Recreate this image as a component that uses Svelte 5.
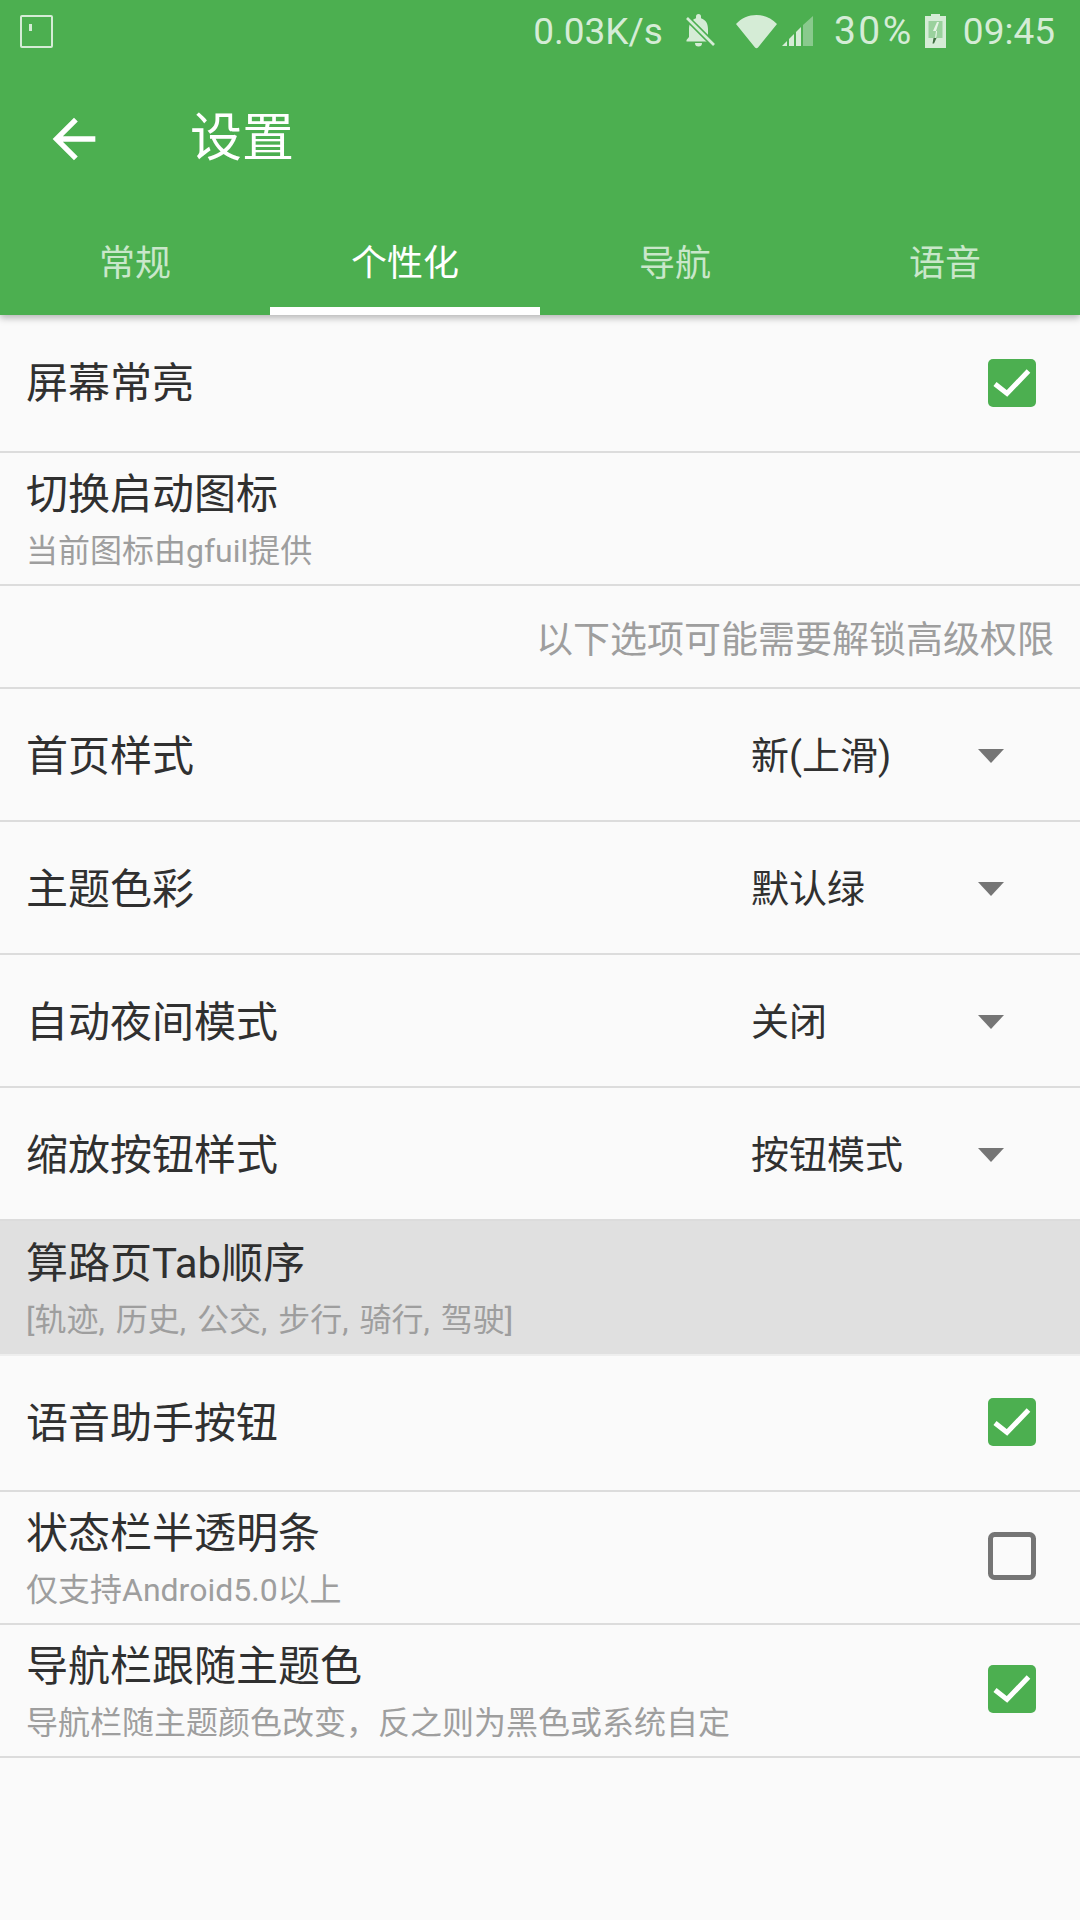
<script lang="ts">
	const tabs = ['常规', '个性化', '导航', '语音'];
	const activeTab = 1;
	const rows = [
		{ kind: 'check', title: '屏幕常亮', checked: true, height: 138 },
		{ kind: 'text', title: '切换启动图标', sub: '当前图标由gfuil提供', height: 133 },
		{ kind: 'note', title: '以下选项可能需要解锁高级权限', height: 103 },
		{ kind: 'select', title: '首页样式', value: '新(上滑)', height: 133 },
		{ kind: 'select', title: '主题色彩', value: '默认绿', height: 133 },
		{ kind: 'select', title: '自动夜间模式', value: '关闭', height: 133 },
		{ kind: 'select', title: '缩放按钮样式', value: '按钮模式', height: 133 },
		{ kind: 'text', title: '算路页Tab顺序', sub: '[轨迹, 历史, 公交, 步行, 骑行, 驾驶]', height: 135, pressed: true },
		{ kind: 'check', title: '语音助手按钮', checked: true, height: 136 },
		{ kind: 'check', title: '状态栏半透明条', sub: '仅支持Android5.0以上', checked: false, height: 133 },
		{ kind: 'check', title: '导航栏跟随主题色', sub: '导航栏随主题颜色改变，反之则为黑色或系统自定', checked: true, height: 133 }
	];
</script>

<div class="page" lang="zh-CN">
	<header class="appbar">
		<div class="status">
			<svg class="notif" viewBox="0 0 33 33" aria-hidden="true">
				<rect x="1" y="1" width="31" height="31" rx="1" fill="none" stroke="currentColor" stroke-width="2" />
				<rect x="9" y="9" width="3" height="7" fill="currentColor" />
			</svg>
			<span class="spacer"></span>
			<span class="speed">0.03K/s</span>
			<svg class="bell" viewBox="0 0 30 34" aria-hidden="true">
				<path d="M13.500 0a2.500 2.500 0 0 1 2.500 2.500v1.700C21 5.800 23 10 23 15v8l2.500 3v1.500H1.500V26L4 23v-8c0-5 2-9.200 7-10.800V2.500A2.500 2.500 0 0 1 13.500 0z" fill="currentColor" />
				<path d="M10 29h7a3.500 3.500 0 0 1-7 0z" fill="currentColor" />
				<path d="M2 4l27 27" stroke="#4caf50" stroke-width="6" />
				<path d="M2 4l27 27" stroke="currentColor" stroke-width="2.600" />
			</svg>
			<svg class="wifi" viewBox="0 0 41 35" aria-hidden="true">
				<path d="M0 10C5.500 4 12.500 1 20.500 1S35.500 4 41 10L22 33.500c-.8 1-2.200 1-3 0z" fill="currentColor" />
			</svg>
			<svg class="signal" viewBox="0 0 31 30" aria-hidden="true">
				<path d="M0 30l5-5v5z" fill="currentColor" />
				<path d="M7 23l5-5v12H7z" fill="currentColor" />
				<path d="M14 16l5-5v19h-5z" fill="currentColor" />
				<path d="M21 9L31 0v30H21z" fill="currentColor" opacity="0.45" />
			</svg>
			<span class="percent">30%</span>
			<svg class="battery" viewBox="0 0 21 34" aria-hidden="true">
				<path d="M6 0h9v2h6v32H0V2h6z" fill="currentColor" />
				<rect x="3.500" y="7" width="14" height="17" fill="#9ad19d" />
				<path d="M12 8L8 17h3l-1 7h-2l-1.500 6 5-7.500L12 17h-1l3-9z" fill="#e6f4e6" />
				<path d="M8.500 24h3L9 29.500H7.500z" fill="#3f6f41" />
			</svg>
			<span class="clock">09:45</span>
		</div>

		<div class="toolbar">
			<svg class="back" viewBox="0 0 24 24" aria-hidden="true">
				<path d="M20 11H7.830l5.590-5.590L12 4l-8 8 8 8 1.410-1.410L7.830 13H20v-2z" fill="currentColor" />
			</svg>
			<span class="title">设置</span>
		</div>

		<nav class="tabs">
			{#each tabs as tab, i}
				<div class="tab" class:active={i === activeTab}>{tab}</div>
			{/each}
		</nav>
	</header>

	<main class="list">
		{#each rows as row}
			<div
				class="row"
				class:pressed={row.pressed}
				class:note={row.kind === 'note'}
				class:with-select={row.kind === 'select'}
				style="height: {row.height}px"
			>
				{#if row.kind === 'note'}
					<span class="note-text">{row.title}</span>
				{:else}
					<div class="labels">
						<span class="row-title">{row.title}</span>
						{#if row.sub}
							<span class="row-sub">{row.sub}</span>
						{/if}
					</div>
				{/if}

				{#if row.kind === 'select'}
					<div class="select">
						<span class="select-value">{row.value}</span>
						<span class="caret"></span>
					</div>
				{/if}

				{#if row.kind === 'check'}
					{#if row.checked}
						<svg class="checkbox" viewBox="0 0 48 48" aria-hidden="true">
							<rect width="48" height="48" rx="5" fill="#4caf50" />
							<path d="M7 25l12 9.500L40.500 12" fill="none" stroke="#fff" stroke-width="5" />
						</svg>
					{:else}
						<svg class="checkbox" viewBox="0 0 48 48" aria-hidden="true">
							<rect x="2.500" y="2.500" width="43" height="43" rx="4" fill="none" stroke="#757575" stroke-width="5" />
						</svg>
					{/if}
				{/if}
			</div>
		{/each}
	</main>
</div>

<style>
	:global(body) {
		background: #fafafa;
	}

	.page {
		width: 1080px;
		height: 1920px;
		overflow: hidden;
		display: flex;
		flex-direction: column;
		background: #fafafa;
		font-family: Roboto, 'Noto Sans CJK SC', sans-serif;
	}

	/* ===== App bar ===== */
	.appbar {
		position: relative;
		z-index: 1;
		background: #4caf50;
		color: #fff;
		box-shadow: 0 3px 7px rgba(0, 0, 0, 0.28);
	}
	.status {
		height: 62px;
		display: flex;
		align-items: center;
		padding: 0 25px 0 20px;
		color: #d5ecd6;
		font-size: 37px;
	}
	.spacer {
		flex: 1;
	}
	.notif {
		width: 33px;
		height: 33px;
	}
	.bell {
		width: 30px;
		height: 34px;
		margin-left: 22px;
	}
	.wifi {
		width: 41px;
		height: 35px;
		margin-left: 21px;
	}
	.signal {
		width: 31px;
		height: 30px;
		margin-left: 5px;
	}
	.percent {
		margin-left: 21px;
		font-size: 39px;
		letter-spacing: 2.5px;
	}
	.battery {
		width: 21px;
		height: 34px;
		margin-left: 11px;
	}
	.clock {
		margin-left: 17px;
	}

	.toolbar {
		height: 158px;
		display: flex;
		align-items: center;
		padding-left: 42px;
	}
	.back {
		width: 64px;
		height: 64px;
		margin-top: -4px;
	}
	.title {
		margin-left: 84px;
		font-size: 52px;
		line-height: 1;
		margin-top: -4px;
	}

	.tabs {
		height: 95px;
		display: grid;
		grid-template-columns: repeat(4, 270px);
	}
	.tab {
		display: flex;
		align-items: center;
		justify-content: center;
		padding-bottom: 16px;
		box-sizing: border-box;
		font-size: 36px;
		color: #c9e7ca;
	}
	.tab.active {
		color: #fff;
		border-bottom: 8px solid #fff;
		padding-bottom: 8px;
	}

	/* ===== Rows ===== */
	.list {
		display: flex;
		flex-direction: column;
	}
	.row {
		display: flex;
		align-items: center;
		padding: 0 44px 0 26px;
		box-sizing: border-box;
		border-bottom: 2px solid #dcdcdc;
	}
	.row.pressed {
		background: #e0e0e0;
		border-bottom-color: #eeeeee;
	}
	.row.note {
		justify-content: flex-end;
		padding-right: 26px;
	}
	.row.with-select {
		padding-top: 2px;
	}
	.row.pressed ~ .row .checkbox {
		margin-bottom: 3px;
	}
	.note-text {
		font-size: 37px;
		color: #9e9e9e;
	}
	.labels {
		flex: 1;
		display: flex;
		flex-direction: column;
		gap: 10px;
		padding-top: 2px;
	}
	.row-title {
		font-size: 42px;
		line-height: 52px;
		color: #303030;
	}
	.row-sub {
		font-size: 32px;
		line-height: 40px;
		word-spacing: 3px;
		color: #9e9e9e;
	}

	.select {
		width: 285px;
		flex-shrink: 0;
		display: flex;
		align-items: center;
		justify-content: space-between;
	}
	.select-value {
		font-size: 38px;
		line-height: 52px;
		color: #303030;
	}
	.caret {
		width: 0;
		height: 0;
		border-left: 13px solid transparent;
		border-right: 13px solid transparent;
		border-top: 14px solid #757575;
		margin-right: 32px;
	}
	.checkbox {
		width: 48px;
		height: 48px;
		flex-shrink: 0;
	}
</style>
